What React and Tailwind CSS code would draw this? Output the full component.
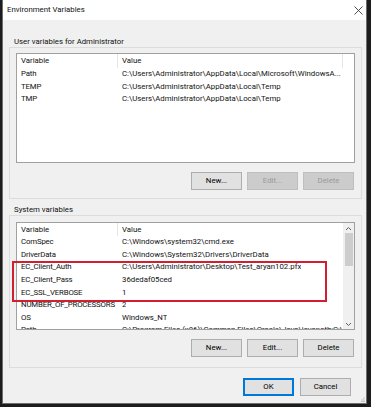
const userRows = [
  ['Path', 'C:\\Users\\Administrator\\AppData\\Local\\Microsoft\\WindowsA...'],
  ['TEMP', 'C:\\Users\\Administrator\\AppData\\Local\\Temp'],
  ['TMP', 'C:\\Users\\Administrator\\AppData\\Local\\Temp'],
];

const systemRows = [
  ['ComSpec', 'C:\\Windows\\system32\\cmd.exe'],
  ['DriverData', 'C:\\Windows\\System32\\Drivers\\DriverData'],
  ['EC_Client_Auth', 'C:\\Users\\Administrator\\Desktop\\Test_aryan102.pfx'],
  ['EC_Client_Pass', '36dedaf05ced'],
  ['EC_SSL_VERBOSE', '1'],
  ['NUMBER_OF_PROCESSORS', '2'],
  ['OS', 'Windows_NT'],
  ['Path', 'C:\\Program Files (x86)\\Common Files\\Oracle\\Java\\javapath;C:\\Pro...'],
];

function Button({ children, disabled, primary }) {
  return (
    <div
      className={
        'w-[51px] h-[18px] flex items-center justify-center border ' +
        (disabled
          ? 'bg-[#cccccc] border-[#bfbfbf] text-[#9a9a9a]'
          : primary
          ? 'bg-[#e1e1e1] border-[#0078d7] shadow-[inset_0_0_0_1px_#0078d7] text-black'
          : 'bg-[#e1e1e1] border-[#adadad] text-black')
      }
    >
      {children}
    </div>
  );
}

function Header({ h, endSep }) {
  return (
    <div className={`flex shrink-0 ${h}`}>
      <div className="w-[101px] pl-[4px] flex items-center border-r border-[#e5e5e5]">Variable</div>
      <div className={`pl-[4px] flex items-center ${endSep ? 'w-[225px] border-r border-[#e5e5e5]' : 'flex-1'}`}>Value</div>
    </div>
  );
}

function Rows({ rows }) {
  return rows.map(([k, v], i) => (
    <div key={i} className="flex h-[12.6px] shrink-0 items-center whitespace-nowrap">
      <div className="w-[101px] pl-[4px] pr-[2px] shrink-0 tracking-[-0.15px]">{k}</div>
      <div className="pl-[4px] overflow-hidden">{v}</div>
    </div>
  ));
}

function Chevron({ up }) {
  return (
    <svg width="7" height="5" viewBox="0 0 7 5">
      <polyline
        points={up ? '1,4 3.5,1.5 6,4' : '1,1 3.5,3.5 6,1'}
        fill="none"
        stroke="#606060"
        strokeWidth="1"
      />
    </svg>
  );
}

export default function App() {
  return (
    <div className="w-[371px] h-[407px] bg-[#1c1c1c] overflow-hidden font-['Roboto',Arial,sans-serif] text-[7.8px] text-[#111] leading-[10px]">
      <div className="ml-[2px] w-[365px] h-[404px] bg-[#f0f0f0] border-l border-r border-b border-[#6e6e6e] flex flex-col relative">
        {/* Title bar */}
        <div className="h-[20px] bg-white flex items-center justify-between pl-[4px] pr-[3px]">
          <span>Environment Variables</span>
          <svg width="9" height="9" viewBox="0 0 9 9">
            <path d="M0.5 0.5 L8.5 8.5 M8.5 0.5 L0.5 8.5" stroke="#3a3a3a" strokeWidth="0.9" />
          </svg>
        </div>

        {/* User variables */}
        <div className="pt-[17px] pl-[11px] h-[27px]">User variables for Administrator</div>
        <div className="ml-[6px] w-[353px] border border-[#dcdcdc] pt-[5px] pb-[8px] flex flex-col">
          <div className="ml-[6px] w-[339px] h-[110px] bg-white border border-[#a0a0a0] flex flex-col overflow-hidden">
            <Header h="h-[14px]" endSep />
            <Rows rows={userRows} />
          </div>
          <div className="mt-[9px] pr-[7px] flex justify-end gap-[5px]">
            <Button>New...</Button>
            <Button disabled>Edit...</Button>
            <Button disabled>Delete</Button>
          </div>
        </div>

        {/* System variables */}
        <div className="mt-[6px] pl-[11px] h-[10px]">System variables</div>
        <div className="ml-[6px] w-[353px] border border-[#dcdcdc] pt-[6px] pb-[10px] flex flex-col relative">
          <div className="ml-[6px] w-[339px] h-[108px] bg-white border border-[#a0a0a0] flex overflow-hidden">
            <div className="flex-1 flex flex-col overflow-hidden">
              <Header h="h-[13px]" />
              <Rows rows={systemRows} />
            </div>
            <div className="w-[11px] bg-[#f0f0f0] flex flex-col items-center">
              <div className="h-[10px] flex items-center justify-center">
                <Chevron up />
              </div>
              <div className="w-[8px] h-[33px] bg-[#cdcdcd]" />
              <div className="flex-1" />
              <div className="h-[10px] flex items-center justify-center">
                <Chevron />
              </div>
            </div>
          </div>
          <div className="mt-[9px] pr-[7px] flex justify-end gap-[5px]">
            <Button>New...</Button>
            <Button>Edit...</Button>
            <Button>Delete</Button>
          </div>
          {/* highlight annotation */}
          <div className="absolute left-[2px] top-[45px] w-[315px] h-[41px] border-2 border-[#d11f2f]" />
        </div>

        {/* Dialog buttons */}
        <div className="mt-[10px] pr-[15px] flex justify-end gap-[6px]">
          <Button primary>OK</Button>
          <Button>Cancel</Button>
        </div>

        {/* resize grip */}
        <svg className="absolute right-[1px] bottom-[1px]" width="5" height="5" viewBox="0 0 5 5">
          <rect x="3.5" y="0.5" width="1" height="1" fill="#9a9a9a" />
          <rect x="1.5" y="2.5" width="1" height="1" fill="#9a9a9a" />
          <rect x="3.5" y="2.5" width="1" height="1" fill="#9a9a9a" />
          <rect x="3.5" y="4" width="1" height="1" fill="#9a9a9a" />
          <rect x="1.5" y="4" width="1" height="1" fill="#9a9a9a" />
        </svg>
      </div>
    </div>
  );
}
